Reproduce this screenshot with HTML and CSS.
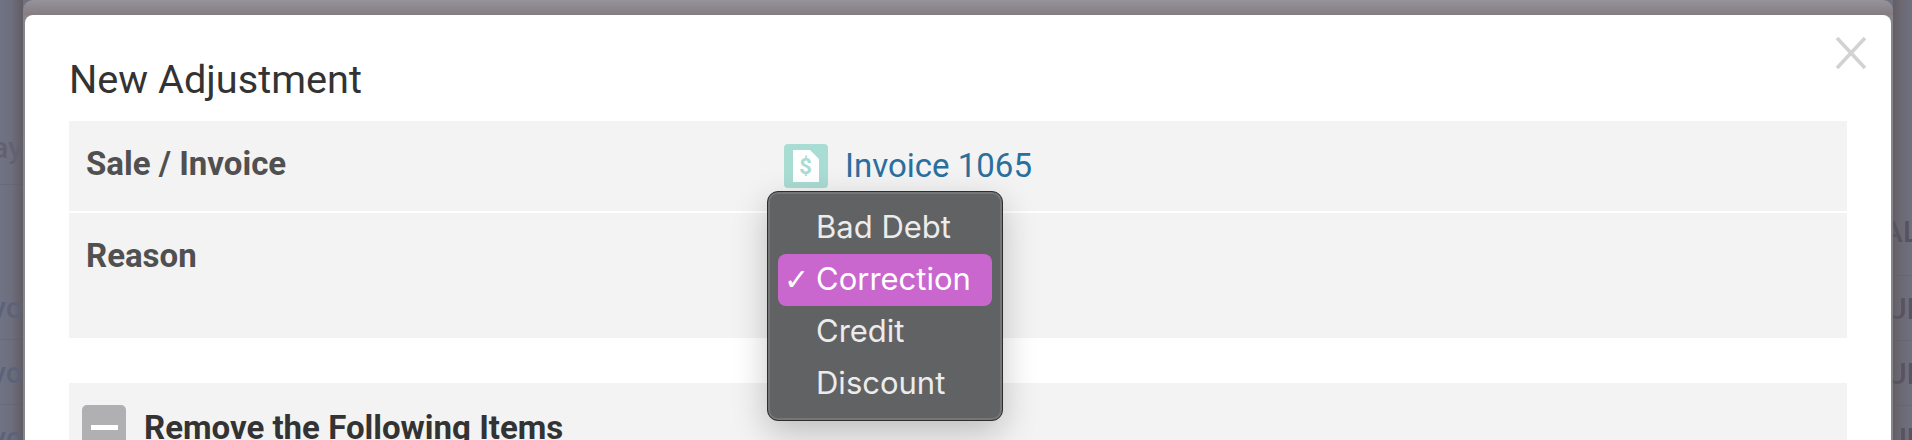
FILE: index.html
```html
<!DOCTYPE html>
<html lang="en">
<head>
  <meta charset="UTF-8" />
  <title>New Adjustment</title>
  <link rel="stylesheet" href="styles.css">
</head>
<body>
  <div class="page">
    <div class="gutter gutter-left">
      <div class="ghost ghost-pay">Pay</div>
      <div class="ghost">Invo</div>
      <div class="ghost">Invo</div>
      <div class="ghost">Invo</div>
    </div>

    <div class="modal-frame">
      <div class="modal">
        <button class="close-btn" aria-label="Close">
          <svg width="32" height="34" viewBox="0 0 32 34"><path d="M2 2 L30 32 M30 2 L2 32" stroke="#d2d2d2" stroke-width="3.6" fill="none"/></svg>
        </button>
        <h1 class="modal-title">New Adjustment</h1>

        <div class="field-row field-sale">
          <div class="field-label">Sale / Invoice</div>
          <div class="field-value">
            <span class="doc-icon">
              <svg width="26" height="32" viewBox="0 0 26 32"><path d="M0 0 H17 L26 9 V32 H0 Z" fill="#fff"/><text x="12.5" y="24" text-anchor="middle" class="doc-dollar">$</text></svg>
            </span>
            <a class="invoice-link" href="#">Invoice 1065</a>
          </div>
        </div>

        <div class="field-row field-reason">
          <div class="field-label">Reason</div>
          <div class="select-menu">
            <div class="select-option">Bad Debt</div>
            <div class="select-option selected"><span class="tick">✓</span>Correction</div>
            <div class="select-option">Credit</div>
            <div class="select-option">Discount</div>
          </div>
        </div>

        <div class="items-row">
          <span class="minus-icon"><span class="minus-bar"></span></span>
          <h2 class="items-title">Remove the Following Items</h2>
        </div>
      </div>
    </div>

    <div class="gutter gutter-right">
      <div class="ghost ghost-total">AL</div>
      <div class="ghost">UD</div>
      <div class="ghost">UD</div>
      <div class="ghost">UD</div>
    </div>
  </div>
</body>
</html>
```

FILE: styles.css
```css
* {
  box-sizing: border-box;
}
html, body {
  margin: 0;
  height: 440px;
  overflow: hidden;
}
body {
  font-family: Roboto, 'Liberation Sans', sans-serif;
  background: #6f7080;
}
.page {
  display: flex;
  height: 440px;
}
.gutter {
  overflow: hidden;
  white-space: nowrap;
  font-size: 30px;
  font-weight: 500;
}
.gutter-left {
  width: 23px;
  flex: none;
  display: flex;
  flex-direction: column;
  align-items: flex-end;
  color: #5c6278;
  background: linear-gradient(to right, #707385 0, #6d6e7e 50%, #625c63 100%);
}
.gutter-right {
  flex: 1;
  color: #575360;
  background: linear-gradient(to right, #645e65 0, #6b6872 40%, #6f7080 100%);
}
.ghost {
  flex: none;
  height: 65px;
  line-height: 65px;
  text-indent: -6px;
  border-bottom: 1px solid rgba(90, 90, 105, 0.3);
  filter: blur(0.6px);
}
.gutter-left .ghost {
  width: 60px;
  text-align: right;
  text-indent: 0;
}
.gutter-left .ghost-pay {
  margin-top: 115px;
  height: 70px;
  margin-bottom: 90px;
  color: #62626f;
}
.ghost-total {
  margin-top: 200px;
  height: 76px;
  line-height: 64px;
  text-indent: -10px;
}
.modal-frame {
  width: 1870px;
  flex: none;
  padding: 15px 2px 0 2px;
  background:
    linear-gradient(to bottom, #97939b 0, #837d82 15px, #86868a 15px);
  border-radius: 10px 10px 0 0;
}
.modal {
  position: relative;
  height: 425px;
  padding: 41px 44px 0 44px;
  background: #fff;
  border-radius: 8px 8px 0 0;
  overflow: hidden;
}
.close-btn {
  position: absolute;
  top: 21px;
  right: 24px;
  padding: 0;
  border: none;
  background: none;
  line-height: 0;
}
.modal-title {
  margin: 0 0 18px 0;
  font-size: 39.7px;
  font-weight: 400;
  line-height: 47px;
  color: #333;
}
.field-row {
  display: flex;
  background: #f3f3f3;
  padding: 0 17px;
}
.field-sale {
  height: 90px;
  margin-bottom: 2px;
  align-items: flex-start;
}
.field-reason {
  height: 125px;
  margin-bottom: 45px;
}
.field-label {
  width: 698px;
  flex: none;
  padding-top: 24px;
  font-size: 33px;
  font-weight: 700;
  line-height: 38px;
  color: #505050;
}
.field-value {
  display: flex;
  align-items: center;
  gap: 17px;
  padding-top: 22px;
}
.doc-icon {
  width: 44px;
  height: 44px;
  display: flex;
  align-items: center;
  justify-content: center;
  background: #a9dcd3;
  border-radius: 4px;
}
.doc-dollar {
  font-family: Roboto, sans-serif;
  font-size: 22px;
  font-weight: 700;
  fill: #a9dcd3;
}
.invoice-link {
  font-size: 33px;
  line-height: 46px;
  color: #2a6f9e;
  text-decoration: none;
}
.select-menu {
  position: absolute;
  z-index: 5;
  left: 742px;
  top: 176px;
  width: 236px;
  height: 230px;
  padding: 10px;
  background: #616263;
  border: 1px solid #2e2e2e;
  border-radius: 11px;
  box-shadow: inset 0 0 0 2px #757677, 0 12px 34px rgba(0, 0, 0, 0.22);
  font-family: Inter, 'Noto Sans', sans-serif;
  font-size: 31px;
  color: #ececec;
}
.select-option {
  position: relative;
  height: 52px;
  line-height: 50px;
  padding-left: 38px;
}
.selected {
  background: #c967cf;
  color: #fff;
  border-radius: 8px;
}
.tick {
  position: absolute;
  left: 6px;
  top: 1px;
  font-size: 30px;
  font-family: 'DejaVu Sans', sans-serif;
}
.items-row {
  display: flex;
  align-items: flex-start;
  gap: 18px;
  height: 80px;
  background: #f3f3f3;
  padding: 22px 13px 0 13px;
}
.minus-icon {
  width: 44px;
  height: 44px;
  flex: none;
  display: flex;
  align-items: center;
  justify-content: center;
  background: #b0b0b2;
  border-radius: 5px;
}
.minus-bar {
  width: 27px;
  height: 5px;
  background: #fff;
}
.items-title {
  margin: 4px 0 0 0;
  font-size: 33px;
  font-weight: 700;
  line-height: 38px;
  color: #333;
}
```
